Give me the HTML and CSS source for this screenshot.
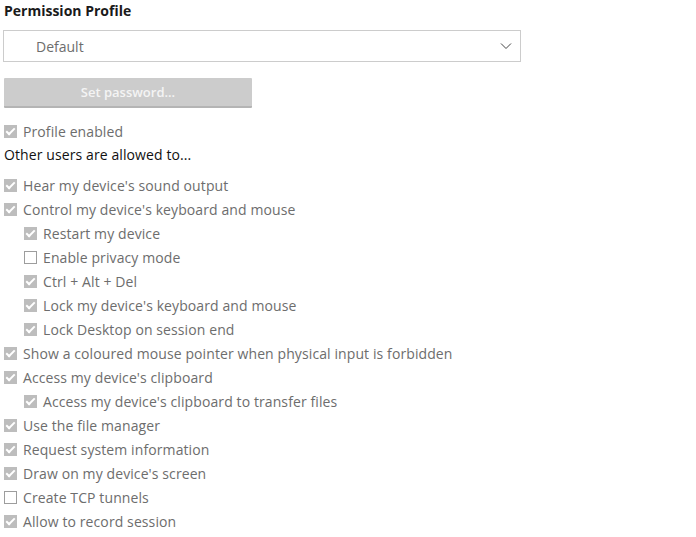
FILE: index.html
```html
<!DOCTYPE html>
<html>
<head>
<meta charset="utf-8">
<link rel="stylesheet" href="styles.css">
</head>
<body>
<div class="panel">
  <div class="title">Permission Profile</div>
  <div class="select">
    <span class="select-text">Default</span>
    <svg class="chev" width="12" height="8" viewBox="0 0 12 8"><path d="M1 1.5 L6 6.5 L11 1.5" fill="none" stroke="#444" stroke-width="1"/></svg>
  </div>
  <div class="btn">Set password...</div>
  <div class="rows">
    <label class="row"><span class="cb on"></span>Profile enabled</label>
    <div class="note">Other users are allowed to...</div>
    <div class="list">
      <label class="row"><span class="cb on"></span>Hear my device's sound output</label>
      <label class="row"><span class="cb on"></span>Control my device's keyboard and mouse</label>
      <label class="row sub"><span class="cb on"></span>Restart my device</label>
      <label class="row sub"><span class="cb"></span>Enable privacy mode</label>
      <label class="row sub"><span class="cb on"></span>Ctrl + Alt + Del</label>
      <label class="row sub"><span class="cb on"></span>Lock my device's keyboard and mouse</label>
      <label class="row sub"><span class="cb on"></span>Lock Desktop on session end</label>
      <label class="row"><span class="cb on"></span>Show a coloured mouse pointer when physical input is forbidden</label>
      <label class="row"><span class="cb on"></span>Access my device's clipboard</label>
      <label class="row sub"><span class="cb on"></span>Access my device's clipboard to transfer files</label>
      <label class="row"><span class="cb on"></span>Use the file manager</label>
      <label class="row"><span class="cb on"></span>Request system information</label>
      <label class="row"><span class="cb on"></span>Draw on my device's screen</label>
      <label class="row"><span class="cb"></span>Create TCP tunnels</label>
      <label class="row"><span class="cb on"></span>Allow to record session</label>
    </div>
  </div>
</div>
</body>
</html>
```
FILE: styles.css
```css
html, body {
  margin: 0;
  padding: 0;
  background: #ffffff;
}
body {
  font-family: "Open Sans", "Noto Sans", sans-serif;
  font-size: 13px;
  color: #6f6f6f;
}
.panel {
  padding: 0 0 0 4px;
  display: flex;
  flex-direction: column;
}
.title {
  font-weight: 700;
  font-size: 14px;
  color: #1a1a1a;
  height: 20px;
  line-height: 20px;
  margin-top: 1px;
}
.select {
  margin: 9px 0 0 -1px;
  width: 516px;
  height: 30px;
  border: 1px solid #cccccc;
  display: flex;
  align-items: center;
  justify-content: space-between;
  box-sizing: content-box;
}
.select-text {
  padding-left: 32px;
  font-size: 14px;
  color: #6d6d6d;
}
.chev {
  margin-right: 8px;
}
.btn {
  margin-top: 16px;
  width: 248px;
  height: 28px;
  background: #cccccc;
  border-bottom: 2px solid #b4b4b4;
  color: #f4f4f4;
  font-weight: 600;
  font-size: 13px;
  display: flex;
  align-items: center;
  justify-content: center;
  border-radius: 1px;
}
.rows {
  margin-top: 11px;
  display: flex;
  flex-direction: column;
}
.row {
  display: flex;
  align-items: center;
  height: 24px;
  font-size: 14px;
  letter-spacing: 0.1px;
  color: #6d6d6d;
}
.row.sub {
  padding-left: 20px;
}
.note {
  height: 24px;
  line-height: 24px;
  font-size: 14px;
  letter-spacing: 0.1px;
  color: #111111;
  margin-bottom: 6px;
}
.cb {
  width: 11px;
  height: 11px;
  border: 1px solid #9d9d9d;
  background: #ffffff;
  margin-right: 6px;
  flex: none;
  position: relative;
}
.cb.on {
  background: #bdbdbd;
  border-color: #bdbdbd;
}
.cb.on::after {
  content: "";
  position: absolute;
  left: 3px;
  top: 0px;
  width: 3px;
  height: 7px;
  border-right: 2px solid #ffffff;
  border-bottom: 2px solid #ffffff;
  transform: rotate(45deg);
}
```
